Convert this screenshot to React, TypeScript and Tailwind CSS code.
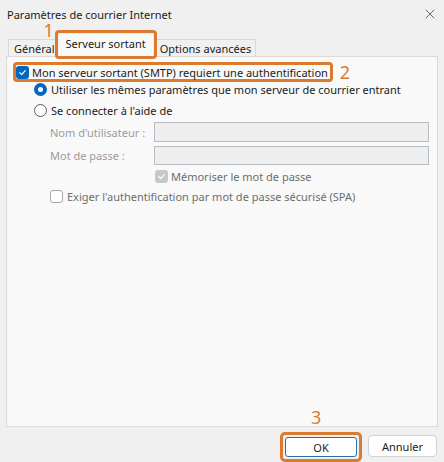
import { X } from "lucide-react";

const orange = "border-[#dc7a30]";

function Check({ disabled }: { disabled?: boolean }) {
  return (
    <span
      className={`flex h-[13px] w-[13px] shrink-0 items-center justify-center rounded-[3px] ${
        disabled ? "bg-[#c8c8c8]" : "bg-[#0067c0]"
      }`}
    >
      <svg width="9" height="9" viewBox="0 0 10 10" fill="none" stroke="white" strokeWidth="1.3" strokeLinecap="round" strokeLinejoin="round">
        <path d="M2 5.2 4.1 7.3 8 2.8" />
      </svg>
    </span>
  );
}

export default function App() {
  return (
    <div className="relative h-[462px] w-[444px] overflow-hidden bg-[#f0f0f0] font-['Noto_Sans',sans-serif] text-[11px] text-[#1b1b1b]">
      {/* title bar */}
      <div className="flex h-[28px] items-center justify-between pl-[7px] pr-[6px]">
        <span className="leading-none">Paramètres de courrier Internet</span>
        <X size={16} strokeWidth={1} className="text-[#222]" />
      </div>

      {/* tabs */}
      <div className="flex h-[28px] items-end pl-[8px]">
        <div className="flex h-[17px] items-center whitespace-nowrap border-l border-t border-[#d9d9d9] pl-[5px] pr-[1px] leading-none">Général</div>
        <div className="relative ml-[3px] flex h-[22px] items-start whitespace-nowrap bg-[#f9f9f9] px-[7px] pt-[4px] leading-none">
          Serveur sortant
          <span className={`absolute -inset-[4px] -bottom-[3px] rounded-[4px] border-[3px] ${orange}`} />
          <span className="absolute -left-[15px] -top-[13px] text-[18px] leading-none text-[#dc7a30]">1</span>
        </div>
        <div className="ml-[3px] flex h-[17px] items-center whitespace-nowrap border-r border-t border-[#d9d9d9] px-[4px] leading-none">Options avancées</div>
      </div>

      {/* panel */}
      <div className="mx-[6px] h-[371px] border border-[#dadada] bg-[#f9f9f9] pl-[6px] pr-[6px] pt-[5px]">
        <div className="flex items-center">
          <div className={`flex h-[20px] items-center gap-[3px] whitespace-nowrap rounded-[4px] border-[3px] ${orange} pl-0 pr-[2px]`}>
            <Check />
            <span className="leading-none">Mon serveur sortant (SMTP) requiert une authentification</span>
          </div>
          <span className="ml-[7px] text-[18px] leading-none text-[#dc7a30]">2</span>
        </div>

        <div className="-mt-[3px] flex flex-col pl-[21px]">
          <div className="flex h-[21px] items-center gap-[4px] whitespace-nowrap">
            <span className="flex h-[13px] w-[13px] shrink-0 items-center justify-center rounded-full bg-[#0067c0]">
              <span className="h-[5px] w-[5px] rounded-full bg-white" />
            </span>
            <span className="leading-none">Utiliser les mêmes paramètres que mon serveur de courrier entrant</span>
          </div>
          <div className="flex h-[21px] items-center gap-[4px]">
            <span className="h-[13px] w-[13px] rounded-full border border-[#5d5d5d] bg-white" />
            <span className="leading-none">Se connecter à l'aide de</span>
          </div>

          <div className="mt-[1px] flex flex-col gap-[4px] pl-[16px] text-[#9b9b9b]">
            <div className="flex h-[20px] items-center">
              <span className="w-[104px] leading-none">Nom d'utilisateur :</span>
              <span className="h-[20px] w-[275px] border border-[#b4bcc6] bg-[#eeeeee]" />
            </div>
            <div className="flex h-[19px] items-center">
              <span className="w-[104px] leading-none">Mot de passe :</span>
              <span className="h-[19px] w-[275px] border border-[#b4bcc6] bg-[#eeeeee]" />
            </div>
            <div className="-mt-[1px] flex h-[17px] items-center gap-[3px] pl-[105px] text-[#6d6d6d]">
              <Check disabled />
              <span className="leading-none">Mémoriser le mot de passe</span>
            </div>
            <div className="-mt-[2px] flex h-[19px] items-center gap-[4px] text-[#6d6d6d]">
              <span className="h-[13px] w-[13px] rounded-[3px] border border-[#a8a8a8] bg-white" />
              <span className="leading-none">Exiger l'authentification par mot de passe sécurisé (SPA)</span>
            </div>
          </div>
        </div>
      </div>

      {/* buttons */}
      <div className="flex justify-end gap-[6px] pr-[7px] pt-[5px]">
        <div className="relative">
          <span className="absolute -top-[24px] left-[31px] text-[18px] leading-none text-[#dc7a30]">3</span>
          <div className={`rounded-[5px] border-[3px] ${orange} p-[2px]`}>
            <div className="flex h-[20px] w-[72px] items-center justify-center rounded-[3px] border border-[#2a6fb0] bg-white leading-none">OK</div>
          </div>
        </div>
        <div className="mt-[3px] flex h-[22px] w-[69px] items-center justify-center rounded-[4px] border border-[#d0d0d0] bg-white leading-none">Annuler</div>
      </div>
    </div>
  );
}
